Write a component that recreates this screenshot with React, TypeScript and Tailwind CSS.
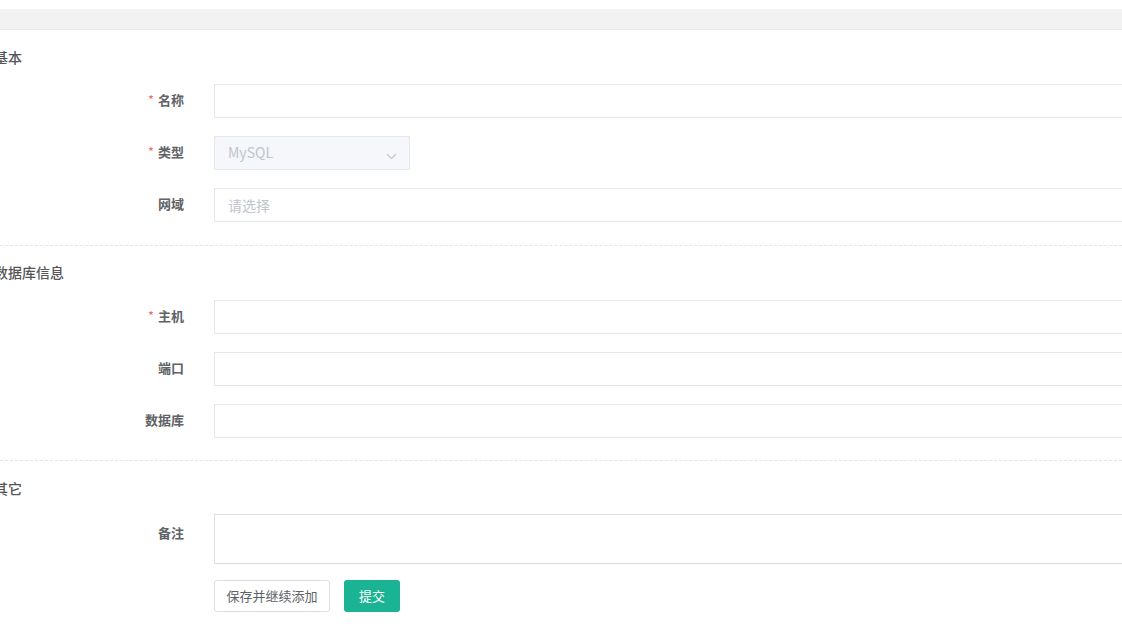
import type { ReactNode } from 'react';

const font = { fontFamily: '"Noto Sans CJK SC", "Noto Sans", sans-serif' };

function Label({ text, required, tall }: { text: string; required?: boolean; tall?: boolean }) {
  return (
    <div
      className={
        tall
          ? 'w-[214px] shrink-0 pr-[30px] pt-[3px] flex justify-end items-start h-[34px] leading-[32px] text-[13px] font-bold text-[#606266]'
          : 'w-[214px] shrink-0 pr-[30px] flex justify-end items-start h-[34px] leading-[32px] text-[13px] font-bold text-[#606266]'
      }
    >
      {required && <span className="text-[#f56c6c] mr-[4px] font-normal">*</span>}
      <span>{text}</span>
    </div>
  );
}

function Row({ label, required, tall, children }: { label: string; required?: boolean; tall?: boolean; children: ReactNode }) {
  return (
    <div className="flex items-start">
      <Label text={label} required={required} tall={tall} />
      {children}
    </div>
  );
}

function TextInput({ placeholder }: { placeholder?: string }) {
  return (
    <div className="w-[1000px] shrink-0 h-[34px] border border-[#e4e7ed] bg-white px-[13px] flex items-center text-[14px] text-[#c0c4cc]">
      {placeholder}
    </div>
  );
}

function SectionTitle({ children }: { children: ReactNode }) {
  return <div className="-ml-[6px] h-[20px] leading-[20px] text-[14px] font-medium text-[#555]">{children}</div>;
}

export default function App() {
  return (
    <div className="w-full h-[630px] overflow-hidden bg-white pt-[9px]" style={font}>
      <div className="h-[21px] bg-[#f2f2f2] border-b border-[#e8e8e8]" />

      <div className="mt-[17px]">
        <SectionTitle>基本</SectionTitle>
        <div className="mt-[17px] flex flex-col gap-[18px]">
          <Row label="名称" required>
            <TextInput />
          </Row>
          <Row label="类型" required>
            <div className="w-[196px] shrink-0 h-[34px] border border-[#e4e7ed] bg-[#f5f7fa] pl-[13px] pr-[12px] flex items-center justify-between text-[14px] text-[#c0c4cc]">
              <span className="-mt-[2px]">MySQL</span>
              <svg width="11" height="7" viewBox="0 0 11 7" className="mt-[6px]">
                <path d="M1 1l4.5 4.5L10 1" fill="none" stroke="#c0c4cc" strokeWidth="1.1" />
              </svg>
            </div>
          </Row>
          <Row label="网域">
            <TextInput placeholder="请选择" />
          </Row>
        </div>
      </div>

      <div className="mt-[23px] border-t border-dashed border-[#e6e6e6] pt-[16px]">
        <SectionTitle>数据库信息</SectionTitle>
        <div className="mt-[18px] flex flex-col gap-[18px]">
          <Row label="主机" required>
            <TextInput />
          </Row>
          <Row label="端口">
            <TextInput />
          </Row>
          <Row label="数据库">
            <TextInput />
          </Row>
        </div>
      </div>

      <div className="mt-[22px] border-t border-dashed border-[#e6e6e6] pt-[17px]">
        <SectionTitle>其它</SectionTitle>
        <div className="mt-[16px] flex flex-col gap-[16px]">
          <Row label="备注" tall>
            <div className="w-[1000px] shrink-0 h-[50px] border border-[#dcdfe6] bg-white" />
          </Row>
          <div className="flex pl-[214px] gap-[14px]">
            <button className="h-[32px] w-[116px] border border-[#dcdfe6] rounded-[3px] bg-white text-[13px] text-[#606266]">
              保存并继续添加
            </button>
            <button className="h-[32px] w-[56px] rounded-[3px] bg-[#1ab394] text-[13px] text-white">提交</button>
          </div>
        </div>
      </div>
    </div>
  );
}
